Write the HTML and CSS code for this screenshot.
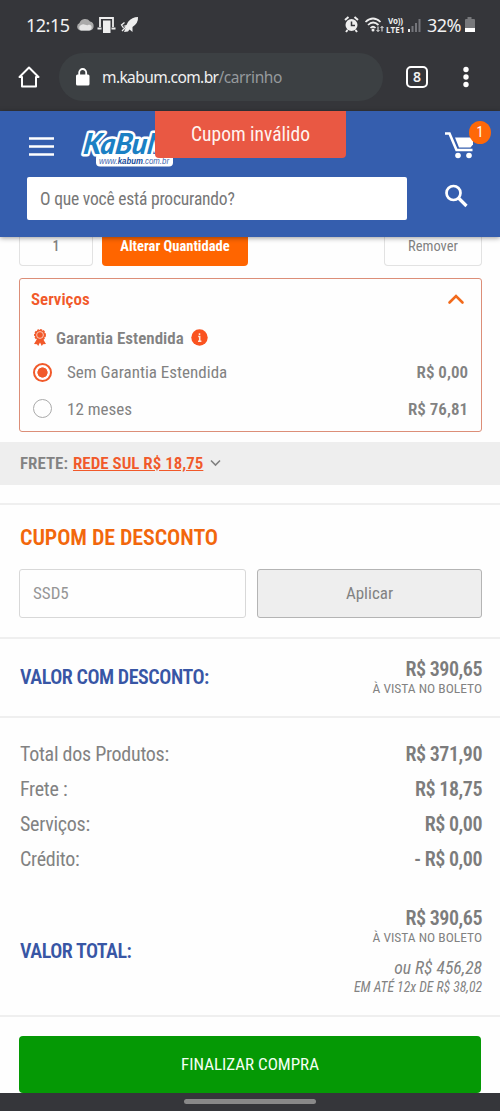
FILE: index.html
```html
<!DOCTYPE html>
<html lang="pt-BR">
<head>
<meta charset="utf-8">
<title>Carrinho</title>
<link rel="stylesheet" href="styles.css">
</head>
<body>
<div class="browser">
  <div class="status">
    <span class="status-text clock">12:15</span>
    <svg class="notif" width="66" height="20" viewBox="0 0 66 20">
      <path d="M5 15.500a4 4 0 0 1-.5-7.500 6 6 0 0 1 10.500-1.500 4.600 4.600 0 0 1 0 9z" fill="#aaa"/>
      <path d="M6 15.500a3 3 0 0 1 0-5.500c3-2 5 1 7 0s5 1 3 4.500q-1 1-2 1z" fill="#e6e6e6"/>
      <path d="M25 12V3h13v9M22.500 13.500h4M36.500 13.500h4" fill="none" stroke="#eee" stroke-width="1.800"/>
      <path d="M28 5.500h7.500V18H28z" fill="#eee"/>
      <path d="M63 2q-6 0-10 5l-1.500 3-3.500 1 3 1-2 5 4-.5 1.500-2 3 2.500v-5q6-4 5.500-10z" fill="#eee"/>
      <path d="M48.500 13l-2-3 3-2.500M51 12l-4 4" fill="none" stroke="#eee" stroke-width="1.300"/>
    </svg>
    <span class="grow"></span>
    <svg class="signals" width="80" height="20" viewBox="0 0 80 20">
      <circle cx="7.500" cy="10" r="6" fill="#eee"/>
      <path d="M1 5l3.500-3M14 5l-3.500-3M3.500 15L2 17M11.500 15l1.500 2" stroke="#eee" stroke-width="2"/>
      <path d="M7.500 6.500v4H11" fill="none" stroke="#35363a" stroke-width="1.500"/>
      <path d="M21.500 7q7.500-7 15 0M24 10q5-5 10.500 0M26.500 13q2.500-2.500 5 0" fill="none" stroke="#eee" stroke-width="1.700"/>
      <circle cx="29" cy="15" r="1.500" fill="#eee"/>
      <path d="M34 11.500v5M32.500 15l1.500 1.500 1.500-1.500M38 16.500v-5M36.500 13l1.500-1.500 1.500 1.500" fill="none" stroke="#eee"/>
      <text class="svg-label" x="44" y="9" textLength="15">Vo))</text>
      <text class="svg-label" x="42" y="17.500" textLength="18.500">LTE1</text>
      <path d="M65 17v-3" stroke="#eee" stroke-width="2"/>
      <path d="M68.500 17v-6M72 17V8M75.500 17V4" stroke="#74757a" stroke-width="2"/>
    </svg>
    <span class="status-text battery-text">32%</span>
    <svg class="battery" width="12" height="18" viewBox="0 0 12 18"><path d="M3.500 1h4v2H10q1 0 1 1v12H1V4q0-1 1-1h1.500z" fill="#77787b"/><path d="M1 12h10v4H1z" fill="#fff"/></svg>
  </div>
  <div class="toolbar">
    <svg class="home" width="24" height="24" viewBox="0 0 24 24"><path d="M12 2.500L2.500 12H5v9.500h14V12h2.500z" fill="none" stroke="#fff" stroke-width="2" stroke-linejoin="round"/></svg>
    <div class="address">
      <svg width="14" height="18" viewBox="0 0 14 18"><rect x="0" y="6.500" width="13.500" height="11" rx="1.500" fill="#fff"/><path d="M3.200 7V4.500a3.500 3.500 0 0 1 7 0V7" fill="none" stroke="#fff" stroke-width="1.800"/></svg>
      <span class="url">m.kabum.com.br<span class="path">/carrinho</span></span>
    </div>
    <div class="tabs">8</div>
    <svg class="dots" width="6" height="22" viewBox="0 0 6 22"><g fill="#fff"><circle cx="3" cy="3.500" r="2.700"/><circle cx="3" cy="11" r="2.700"/><circle cx="3" cy="18.500" r="2.700"/></g></svg>
  </div>
</div>

<header class="header">
  <div class="header-top">
    <svg class="menu" width="25" height="19" viewBox="0 0 25 19"><path d="M0 1.500h25M0 9.500h25M0 17.500h25" stroke="#fff" stroke-width="2.600"/></svg>
    <svg class="logo" width="96" height="40" viewBox="0 0 96 40">
      <rect x="16" y="26" width="77" height="12.500" rx="4" fill="#fff"/>
      <g transform="translate(2.500 26) skewX(-8)"><text class="brand" x="0" y="0" textLength="88" lengthAdjust="spacingAndGlyphs">KaBuM</text></g>
      <text class="brand-url" x="19" y="36" textLength="70" lengthAdjust="spacingAndGlyphs">www.<tspan class="brand-strong">kabum</tspan>.com.br</text>
    </svg>
    <span class="grow"></span>
    <div class="cart">
      <svg width="30" height="28" viewBox="0 0 30 28"><path d="M0 1.500h4.500l7 16.500h16" fill="none" stroke="#fff" stroke-width="2.600"/><path d="M10 5.500h18v7l-2.500 3H14z" fill="#fff"/><circle cx="13" cy="23.500" r="2.800" fill="#fff"/><circle cx="24" cy="23.500" r="2.800" fill="#fff"/></svg>
      <span class="badge">1</span>
    </div>
    <div class="toast">Cupom inválido</div>
  </div>
  <div class="search">
    <div class="search-box">O que você está procurando?</div>
    <svg width="24" height="24" viewBox="0 0 24 24"><circle cx="9.500" cy="9" r="7" fill="none" stroke="#fff" stroke-width="2.700"/><path d="M14.500 14l8 8" stroke="#fff" stroke-width="3.200"/></svg>
  </div>
</header>

<main>
  <div class="item-actions">
    <div class="qty">1</div>
    <div class="change">Alterar Quantidade</div>
    <span class="grow"></span>
    <div class="remove">Remover</div>
  </div>

  <section class="services">
    <div class="services-head"><b>Serviços</b><svg width="18" height="12" viewBox="0 0 18 12"><path d="M2.500 9.500L9 3l6.500 6.500" fill="none" stroke="#f26a1b" stroke-width="2.600" stroke-linecap="round"/></svg></div>
    <div class="warranty">
      <svg width="14" height="18" viewBox="0 0 14 18"><path d="M4 10L1 15l3 .2L5.200 17 7 13.500 8.800 17l1.200-1.800 3-.2-3-5z" fill="#f1592a"/><circle cx="7" cy="6" r="5.200" fill="#f1592a" stroke="#f1592a" stroke-width="1.500" stroke-dasharray="2 1"/><circle cx="7" cy="6" r="3.400" fill="none" stroke="#fbd3c5" stroke-width=".9"/></svg>
      <b>Garantia Estendida</b>
      <svg class="info" width="17" height="17" viewBox="0 0 17 17"><circle cx="8.500" cy="8.500" r="8.200" fill="#fa5320"/><path d="M7.200 7.500h1.500V12M7 12.200h3.400M8.500 4.200v1.800" fill="none" stroke="#ffe9dc" stroke-width="1.500"/></svg>
    </div>
    <div class="option"><span class="radio on"></span><span>Sem Garantia Estendida</span><b>R$ 0,00</b></div>
    <div class="option last"><span class="radio"></span><span>12 meses</span><b>R$ 76,81</b></div>
  </section>

  <div class="shipping"><b>FRETE:</b><b class="ship-link">REDE SUL R$ 18,75</b><svg width="11" height="8" viewBox="0 0 11 8"><path d="M1 1.500l4.500 4.500L10 1.500" fill="none" stroke="#808080" stroke-width="1.600"/></svg></div>

  <section class="coupon">
    <h2>CUPOM DE DESCONTO</h2>
    <div class="coupon-form"><div class="code">SSD5</div><div class="apply">Aplicar</div></div>
  </section>

  <section class="discount">
    <h3>VALOR COM DESCONTO:</h3>
    <div class="amount"><b>R$ 390,65</b><small>À VISTA NO BOLETO</small></div>
  </section>

  <section class="totals">
    <div class="line"><span>Total dos Produtos:</span><b>R$ 371,90</b></div>
    <div class="line"><span>Frete :</span><b>R$ 18,75</b></div>
    <div class="line"><span>Serviços:</span><b>R$ 0,00</b></div>
    <div class="line"><span>Crédito:</span><b>- R$ 0,00</b></div>
    <div class="grand">
      <h3>VALOR TOTAL:</h3>
      <div class="amount"><b>R$ 390,65</b><small>À VISTA NO BOLETO</small><i>ou R$ 456,28</i><i class="install">EM ATÉ 12x DE R$ 38,02</i></div>
    </div>
  </section>

  <section class="checkout"><div class="finish">FINALIZAR COMPRA</div></section>
</main>
<div class="gesture"><span></span></div>
</body>
</html>
```
FILE: styles.css
```css
* { box-sizing: border-box; }
body {
  margin: 0;
  width: 500px;
  height: 1111px;
  overflow: hidden;
  background: #fefefe;
  color: #828282;
  font-family: "Roboto Condensed", Roboto, "Liberation Sans", sans-serif;
  font-stretch: 75%;
  white-space: nowrap;
}
h2, h3 { margin: 0; font-weight: 600; }
b { font-weight: 600; }
svg { display: block; flex: none; }
.grow { flex: 1; }

.browser { height: 111px; background: #35363a; font-family: "Noto Sans", sans-serif; font-stretch: 100%; color: #f1f1f1; }
.status { display: flex; align-items: center; height: 50px; padding: 0 24px 0 26px; }
.status-text { font-size: 18px; }
.clock { width: 44px; letter-spacing: -.5px; }
.notif { margin-left: 5px; }
.signals { margin-right: 3px; }
.battery-text { width: 37px; letter-spacing: -.5px; }
.svg-label { font: 700 8px "Noto Sans", sans-serif; fill: #eee; }
.toolbar { display: flex; align-items: center; height: 54px; padding: 0 31px 0 17px; }
.address { display: flex; align-items: center; width: 324px; height: 48px; margin-left: 18px; padding-left: 17px; border-radius: 24px; background: #3c4043; }
.url { margin-left: 12px; font-size: 15.5px; letter-spacing: -.6px; }
.path { color: #969a9d; letter-spacing: -.4px; }
.tabs { width: 22px; height: 22px; margin-left: 23px; border: 2px solid #fff; border-radius: 5px; font-size: 14px; font-weight: 600; line-height: 18px; text-align: center; }
.dots { margin-left: 35px; }

.header { position: relative; z-index: 1; height: 126px; background: #355eae; box-shadow: 0 1px 5px rgba(0, 0, 0, .4); }
.header-top { position: relative; display: flex; height: 66px; padding: 17px 9px 0 29px; }
.menu { margin-top: 9px; }
.logo { margin-left: 26px; overflow: visible; }
.brand { font: italic 900 29px Lato, sans-serif; fill: #1b80c4; stroke: #fff; stroke-width: 5px; paint-order: stroke; stroke-linejoin: round; }
.brand-url { font: italic 9px "Liberation Sans", sans-serif; fill: #4268b0; }
.brand-strong { font-weight: 700; fill: #174c9b; }
.cart { position: relative; width: 46px; padding-top: 4px; }
.badge { position: absolute; top: -7px; right: 0; width: 22px; height: 23px; border-radius: 50%; background: #ff6808; color: #fff; font-size: 14px; line-height: 23px; text-align: center; }
.toast { position: absolute; top: 0; left: 155px; width: 191px; height: 47px; border-radius: 0 0 4px 4px; background: #e95843; color: #fff4f0; font-size: 19.5px; line-height: 47px; text-align: center; }
.search { display: flex; padding: 0 32px 0 27px; justify-content: space-between; }
.search svg { margin-top: 7px; }
.search-box { width: 380px; height: 43px; padding-left: 13px; border-radius: 2px; background: #fff; color: #777; font-size: 17.5px; line-height: 44px; letter-spacing: -.2px; }

.item-actions { display: flex; height: 29px; padding: 0 18px 0 19px; font-size: 14px; line-height: 19px; text-align: center; }
.qty, .remove { border: 1px solid #e2e2e2; border-top: 0; border-radius: 0 0 4px 4px; }
.qty { width: 74px; font-weight: 500; }
.change { width: 146px; margin-left: 9px; border-radius: 0 0 4px 4px; background: #ff6500; color: #fff; font-size: 14.5px; font-weight: 700; }
.remove { width: 98px; font-size: 14.5px; }

.services { height: 154px; margin: 12px 18px 0 19px; padding: 0 13px 0 11px; border: 1px solid #dc8e78; border-radius: 3px; font-size: 17px; }
.services-head { display: flex; height: 40px; align-items: center; justify-content: space-between; padding-right: 3px; color: #f1592a; }
.warranty { display: flex; height: 37px; align-items: center; padding-left: 2px; }
.warranty b { margin-left: 9px; }
.info { margin-left: 7px; }
.option { display: flex; height: 32px; align-items: center; padding-left: 2px; }
.option.last { height: 41px; }
.option b { margin-left: auto; }
.radio { width: 19px; height: 19px; margin-right: 15px; border: 1px solid #aaa; border-radius: 50%; }
.radio.on { border: 2px solid #f1592a; background: radial-gradient(circle, #f1592a 0 4.800px, #fff 5.400px); }

.shipping { display: flex; align-items: center; height: 43px; margin-top: 10px; padding: 0 0 1px 20px; background: #eee; font-size: 17px; }
.ship-link { margin: 0 7px 0 5px; color: #f1592a; text-decoration: underline; }

.coupon { height: 134px; margin-top: 18px; padding: 20px 18px 0 20px; border-top: 2px solid #efefef; }
.coupon h2 { height: 44px; color: #f2670c; font-size: 22px; line-height: 26px; letter-spacing: -.1px; }
.coupon-form { display: flex; justify-content: space-between; margin-left: -1px; }
.code, .apply { height: 49px; border-radius: 3px; font-size: 17px; line-height: 47px; }
.code { width: 227px; padding-left: 13px; border: 1px solid #d8d8d8; color: #969696; }
.apply { width: 225px; border: 1px solid #b4b4b4; background: #eee; text-align: center; }

.discount { display: flex; height: 79px; padding: 18px 18px 0 20px; border-top: 2px solid #efefef; justify-content: space-between; }
h3 { color: #3856a5; font-size: 20px; line-height: 40px; letter-spacing: -.45px; }
.amount { display: flex; flex-direction: column; align-items: flex-end; }
.amount b, .line b { color: #7c7c7c; letter-spacing: -.45px; }
.amount b { height: 24px; font-size: 20px; line-height: 24px; }
.amount small { height: 14px; font-size: 13.5px; line-height: 14px; }

.totals { height: 299px; padding: 18px 18px 0 20px; border-top: 2px solid #efefef; }
.line { display: flex; height: 35.2px; align-items: center; justify-content: space-between; font-size: 20px; }
.line span { letter-spacing: -.27px; }
.grand { display: flex; justify-content: space-between; margin-top: 29px; }
.grand h3 { margin-top: 25px; }
.amount i { margin-top: 14px; font-size: 17.6px; line-height: 20px; }
.amount .install { margin-top: 0; font-size: 13.7px; line-height: 18px; }

.checkout { height: 78px; padding: 19px 19px 0; border-top: 2px solid #efefef; }
.finish { height: 57px; border-radius: 4px; background: #059905; color: #f4fff4; font-size: 17px; line-height: 57px; text-align: center; }
.gesture { height: 18px; padding: 6px 184px; background: #35363a; }
.gesture span { display: block; height: 5px; border-radius: 3px; background: #898989; }
```
